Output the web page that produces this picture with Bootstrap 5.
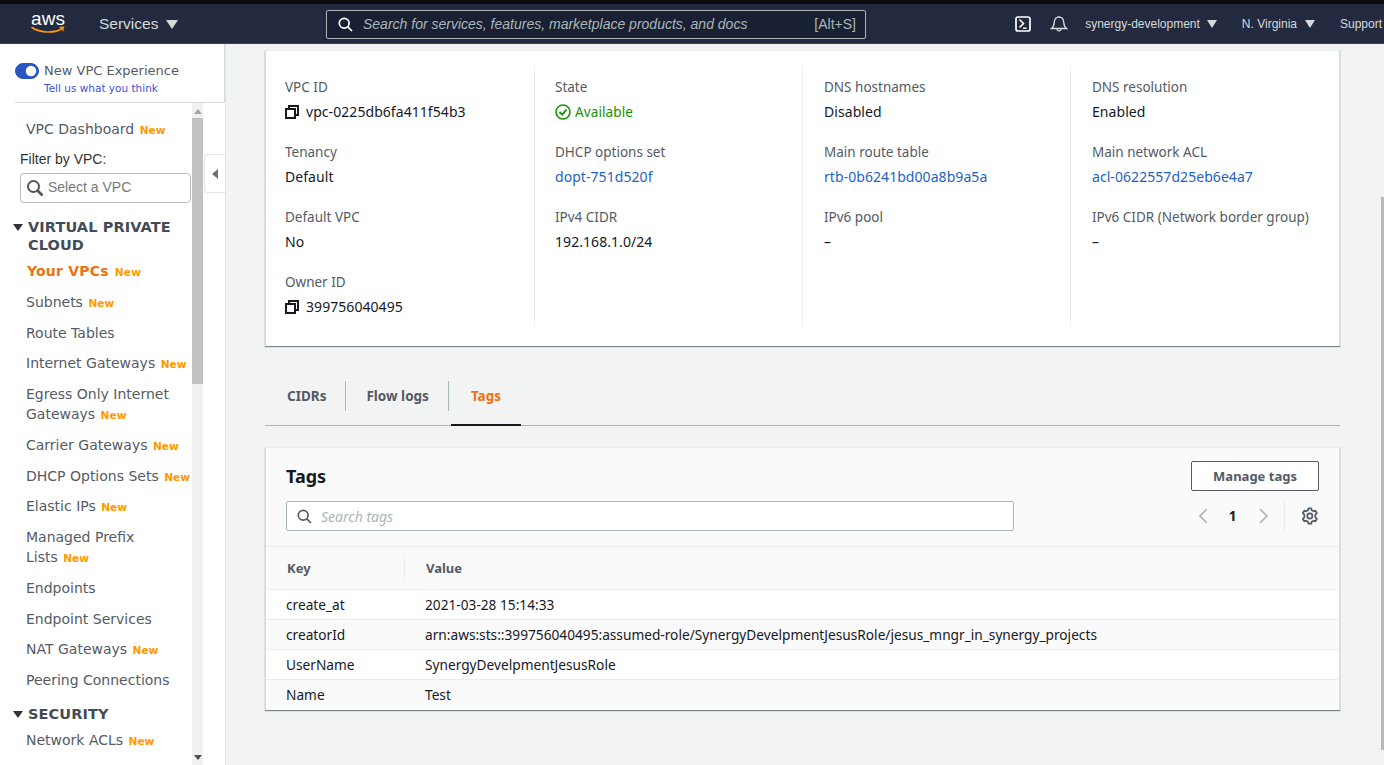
<!DOCTYPE html>
<html lang="en">
<head>
<meta charset="utf-8">
<title>VPC</title>
<link href="https://cdn.jsdelivr.net/npm/bootstrap@5.3.0/dist/css/bootstrap.min.css" rel="stylesheet">
<style>
html,body{height:100%;}
body{font-family:"Noto Sans","Open Sans",sans-serif;font-size:14px;color:#16191f;background:#f2f3f3;overflow:hidden;border-top:4px solid #0c0c0c;}
.shell{height:761px;}
.topbar{height:40px;padding-top:1px;background:#232a3f;color:#d5dbdb;font-family:"Liberation Sans",sans-serif;border-bottom:1px solid #3a4255;flex:none;}
.logo-box{width:36px;margin-left:30px;line-height:1;color:#fff;}
.logo-word{font-size:19px;line-height:16px;display:block;text-align:center;margin-top:-4px;}
.logo-box svg{display:block;margin-top:-1px;}
.svc{font-size:15.5px;margin-left:33px;width:227px;}
.tri{display:inline-block;width:0;height:0;border-left:6px solid transparent;border-right:6px solid transparent;border-top:9px solid #d5dbdb;}
.tri-sm{border-left-width:5.5px;border-right-width:5.5px;border-top-width:8px;}
.topsearch{width:540px;height:29px;border:1px solid #aab7b8;border-radius:2px;background:#1a2033;padding:0 9px 0 11px;font-size:14px;}
.topsearch em{color:#aab7b8;flex:1;margin-left:10px;}
.topsearch span{color:#aab7b8;font-size:14px;}
.topright{font-size:12px;margin-left:auto;}
.side{width:225px;flex:none;background:#fff;color:#545b64;font-family:"DejaVu Sans",sans-serif;}
.side-top{margin-left:15px;height:59px;padding-top:19px;border-bottom:1px solid #d5dbdb;border-right:1px solid #d5dbdb;flex:none;}
.form-switch.toggle-row{padding:0;min-height:0;margin:0;}
.toggle-row .form-check-input{float:none;margin:0;width:24px;height:16px;background-color:#2a55c4;border-color:#2a55c4;flex:none;}
.exp{font-size:13px;line-height:16px;color:#545b64;margin-left:1px;}
.tell{font-size:10.5px;color:#3d4fd6;line-height:14px;margin:2px 0 0 29px;display:block;text-decoration:none;}
.side-main{flex:1;min-height:0;}
.side-list{width:192px;flex:none;overflow:hidden;padding-top:16px;}
.track{width:11px;background:#f1f1f1;flex:none;}
.arrow-up{width:0;height:0;border-left:4px solid transparent;border-right:4px solid transparent;border-bottom:5px solid #a3a3a3;margin:6px auto 4px;}
.arrow-down{width:0;height:0;border-left:4px solid transparent;border-right:4px solid transparent;border-top:5px solid #505050;margin:auto auto 5px;}
.thumb{height:266px;background:#c1c1c1;}
.navi{display:block;margin:0 0 10.75px 26px;line-height:20px;color:#545b64;text-decoration:none;font-size:14px;}
.navi b{color:#f90;font-size:10.6px;font-weight:700;line-height:1;margin-left:1px;}
.navi.on{color:#ec7211;font-weight:700;margin:0 0 11px 27px;letter-spacing:.2px;}
.filter-lb{font-family:"Liberation Sans",sans-serif;margin:0 0 5px 20px;line-height:18px;font-size:14px;color:#333;}
.filter-in{margin:0 1px 15px 20px;height:30px;border:1px solid #bbb;border-radius:4px;padding:0 5px;font-family:"Liberation Sans",sans-serif;color:#777;}
.sect{margin:0 10px 7px 13px;font-weight:700;line-height:18px;color:#444b56;font-size:14.5px;letter-spacing:.1px;}
.sect i{display:block;width:0;height:0;border-left:5px solid transparent;border-right:5px solid transparent;border-top:7px solid #333;margin:6px 5px 0 0;flex:none;}
.sect-gap{margin-top:15px;}
.collapse-tab{position:absolute;left:204px;top:110px;width:21px;height:39px;background:#fff;border:1px solid #e3e5e5;border-right:0;border-radius:4px 0 0 4px;}
.collapse-tab i{width:0;height:0;border-top:5.5px solid transparent;border-bottom:5.5px solid transparent;border-right:6px solid #6b7075;}
.content{flex:1;min-width:0;padding:6px 44px 0 39px;border-left:1px solid #e3e5e5;}
.panel{background:#fff;border-left:1px solid #d5dbdb;border-right:1px solid #d5dbdb;box-shadow:0 1px 1px 0 rgba(0,28,36,.5);border-top:1px solid #eaeded;height:296px;padding:15px 0 0 1px;}
.fieldcol{height:260px;padding:11px 0 0 20px;border-right:1px solid #eaeded;}
.fieldcol:first-child{padding-left:18px;}
.fieldcol:nth-child(3){padding-left:21px;}
.fieldcol:last-child{border-right:0;padding-left:21px;}
.cell{height:65px;line-height:20px;}
.lab{color:#545b64;margin-bottom:5px;font-size:13.5px;}
.val{color:#16191f;font-size:14px;letter-spacing:.06px;}
.val a{color:#1d63c4;text-decoration:none;}
.val.okay{color:#169300;font-size:13.6px;}
.copyline{gap:7px;}
.tabsrow{margin-top:35px;height:45px;border-bottom:1px solid #aab7b8;padding-left:2px;}
.tabby{height:44px;padding:0 20px;font-weight:700;font-size:13.5px;color:#545b64;line-height:30px;position:relative;}
.tabby span{display:block;}
.tabby.sep::after{content:"";position:absolute;right:0;top:0;height:30px;width:1px;background:#aab7b8;}
.tabby.act{color:#ec7211;border-bottom:2px solid #16191f;height:45px;margin-left:2px;}
.tagbox{margin-top:21px;width:1075px;height:263px;background:#fafafa;border-left:1px solid #d5dbdb;border-right:1px solid #d5dbdb;border-top:1px solid #eaeded;box-shadow:0 1px 1px 0 rgba(0,28,36,.5);}
.tagbox-head{height:99px;padding:13px 20px 0 20px;border-bottom:1px solid #eaeded;}
.tagtitle{font-size:18px;font-weight:700;line-height:30px;color:#16191f;margin:0;}
.managebtn{width:128px;height:30px;padding:0;border:1px solid #545b64;border-radius:2px;background:#fff;color:#545b64;font-weight:700;font-size:13px;line-height:27px;}
.tagsearch{width:728px;height:30px;border:1px solid #aab7b8;border-radius:2px;background:#fff;padding:0 10px;}
.tagsearch input{border:0;padding:0 0 0 9px;font-size:14px;font-style:italic;background:transparent;box-shadow:none;}
.tagsearch input::placeholder{color:#aab7b8;}
.pager{width:128px;height:30px;}
.pageno{font-weight:700;font-size:13.5px;}
.pagediv{width:1px;height:30px;background:#eaeded;}
.tagtable{margin:0;color:#16191f;font-size:13.7px;--bs-table-bg:transparent;}
.tagtable th{height:42px;font-weight:700;color:#545b64;font-size:13px;padding:2px 0 0 21px;vertical-align:middle;border-bottom:1px solid #eaeded;position:relative;}
.tagtable td{height:30px;padding:1px 0 0 20px;vertical-align:middle;line-height:20px;border-bottom:1px solid #eaeded;}
.tagtable tr:last-child td{border-bottom:0;}
.tagtable tbody tr:nth-child(odd){background:#fff;}
.keycol{width:139px;}
.tagtable th.keycol::after{content:"";position:absolute;right:0;top:11px;height:20px;width:1px;background:#eaeded;}
.pagebar{position:absolute;right:0;top:193px;width:3px;height:553px;background:#b9b9b9;}
</style>
</head>
<body>
<div class="shell d-flex flex-column position-relative">
  <header class="topbar d-flex align-items-center">
    <div class="logo-box">
      <span class="logo-word">aws</span>
      <svg width="36" height="8" viewBox="0 0 36 8"><path d="M2 1.5C10 7 25 7.5 32 2.5" fill="none" stroke="#f90" stroke-width="1.6" stroke-linecap="round"/><path d="M29.5 1.5L33.6 1.2L32.6 5" fill="none" stroke="#f90" stroke-width="1.3"/></svg>
    </div>
    <div class="svc d-flex align-items-center gap-2"><span>Services</span><i class="tri"></i></div>
    <div class="topsearch d-flex align-items-center">
      <svg width="15" height="15" viewBox="0 0 15 15" fill="none" stroke="#fff" stroke-width="1.7"><circle cx="6.2" cy="6.2" r="4.9"/><path d="M9.8 9.8L14 14"/></svg>
      <em>Search for services, features, marketplace products, and docs</em><span>[Alt+S]</span>
    </div>
    <div class="topright d-flex align-items-center">
      <svg width="16" height="16" viewBox="0 0 16 16" fill="none" stroke="#fff" stroke-width="1.7"><rect x="1" y="1" width="14" height="14" rx="2"/><path d="M4.5 3.5L8.5 7.5L4.5 11.5M8 12.2H11.5" stroke-width="1.6"/></svg>
      <svg style="margin-left:19px" width="18" height="18" viewBox="0 0 18 18" fill="none" stroke="#d5dbdb" stroke-width="1.3"><path d="M1.5 13.5C4 12 4 10 4.3 7C4.6 4 6.5 2.2 9 2.2S13.4 4 13.7 7C14 10 14 12 16.5 13.5Z"/><path d="M6.8 14.2a2.3 2.3 0 0 0 4.4 0"/><path d="M9 1V2"/></svg>
      <span style="margin-left:17px">synergy-development</span><i class="tri tri-sm" style="margin-left:7px"></i>
      <span style="margin-left:25px">N. Virginia</span><i class="tri tri-sm" style="margin-left:8px"></i>
      <span style="margin-left:25px;width:44px;white-space:nowrap;overflow:hidden">Support</span>
    </div>
  </header>
  <div class="d-flex flex-grow-1 position-relative" style="min-height:0">
    <aside class="side d-flex flex-column">
      <div class="side-top">
        <div class="form-check form-switch toggle-row d-flex align-items-center gap-1">
          <input class="form-check-input" type="checkbox" checked aria-label="New VPC Experience">
          <span class="exp">New VPC Experience</span>
        </div>
        <a class="tell" href="#">Tell us what you think</a>
      </div>
      <div class="side-main d-flex">
        <nav class="side-list">
          <a class="navi" href="#">VPC Dashboard <b>New</b></a>
          <div class="filter-lb">Filter by VPC:</div>
          <div class="filter-in d-flex align-items-center gap-1">
            <svg width="18" height="18" viewBox="0 0 18 18" fill="none" stroke="#555" stroke-width="2"><circle cx="7.5" cy="7.5" r="5.5"/><path d="M11.5 11.5L16.5 16.5" stroke-width="2.6"/></svg>
            <span>Select a VPC</span>
          </div>
          <div class="sect d-flex"><i></i><span>VIRTUAL PRIVATE CLOUD</span></div>
          <a class="navi on" href="#">Your VPCs <b>New</b></a>
          <a class="navi" href="#">Subnets <b>New</b></a>
          <a class="navi" href="#">Route Tables</a>
          <a class="navi" href="#">Internet Gateways <b>New</b></a>
          <a class="navi" href="#">Egress Only Internet<br>Gateways <b>New</b></a>
          <a class="navi" href="#">Carrier Gateways <b>New</b></a>
          <a class="navi" href="#">DHCP Options Sets <b>New</b></a>
          <a class="navi" href="#">Elastic IPs <b>New</b></a>
          <a class="navi" href="#">Managed Prefix<br>Lists <b>New</b></a>
          <a class="navi" href="#">Endpoints</a>
          <a class="navi" href="#">Endpoint Services</a>
          <a class="navi" href="#">NAT Gateways <b>New</b></a>
          <a class="navi" href="#">Peering Connections</a>
          <div class="sect sect-gap d-flex"><i></i><span>SECURITY</span></div>
          <a class="navi" href="#">Network ACLs <b>New</b></a>
        </nav>
        <div class="track d-flex flex-column">
          <div class="arrow-up"></div>
          <div class="thumb"></div>
          <div class="arrow-down"></div>
        </div>
      </div>
      <div class="collapse-tab d-flex align-items-center justify-content-center"><i></i></div>
    </aside>
    <main class="content">
      <section class="panel">
        <div class="row g-0">
          <div class="col-3 fieldcol">
            <div class="cell"><div class="lab">VPC ID</div><div class="val d-flex align-items-center copyline"><svg width="14" height="14" viewBox="0 0 14 14" fill="none" stroke="#16191f" stroke-width="2"><rect x="1" y="4" width="9" height="9"/><path d="M4 4V1H13V10H10"/></svg><span>vpc-0225db6fa411f54b3</span></div></div>
            <div class="cell"><div class="lab">Tenancy</div><div class="val">Default</div></div>
            <div class="cell"><div class="lab">Default VPC</div><div class="val">No</div></div>
            <div class="cell"><div class="lab">Owner ID</div><div class="val d-flex align-items-center copyline"><svg width="14" height="14" viewBox="0 0 14 14" fill="none" stroke="#16191f" stroke-width="2"><rect x="1" y="4" width="9" height="9"/><path d="M4 4V1H13V10H10"/></svg><span>399756040495</span></div></div>
          </div>
          <div class="col-3 fieldcol">
            <div class="cell"><div class="lab">State</div><div class="val okay d-flex align-items-center gap-1"><svg width="16" height="16" viewBox="0 0 16 16" fill="none" stroke="#169300" stroke-width="1.6"><circle cx="8" cy="8" r="7"/><path d="M4.5 8L7.2 10.7L11.5 5.6" stroke-width="1.8"/></svg><span>Available</span></div></div>
            <div class="cell"><div class="lab">DHCP options set</div><div class="val"><a href="#">dopt-751d520f</a></div></div>
            <div class="cell"><div class="lab">IPv4 CIDR</div><div class="val">192.168.1.0/24</div></div>
          </div>
          <div class="col-3 fieldcol">
            <div class="cell"><div class="lab">DNS hostnames</div><div class="val">Disabled</div></div>
            <div class="cell"><div class="lab">Main route table</div><div class="val"><a href="#">rtb-0b6241bd00a8b9a5a</a></div></div>
            <div class="cell"><div class="lab">IPv6 pool</div><div class="val">–</div></div>
          </div>
          <div class="col-3 fieldcol">
            <div class="cell"><div class="lab">DNS resolution</div><div class="val">Enabled</div></div>
            <div class="cell"><div class="lab">Main network ACL</div><div class="val"><a href="#">acl-0622557d25eb6e4a7</a></div></div>
            <div class="cell"><div class="lab">IPv6 CIDR (Network border group)</div><div class="val">–</div></div>
          </div>
        </div>
      </section>
      <div class="tabsrow d-flex">
        <div class="tabby sep"><span>CIDRs</span></div>
        <div class="tabby sep"><span>Flow logs</span></div>
        <div class="tabby act"><span>Tags</span></div>
      </div>
      <section class="tagbox">
        <div class="tagbox-head">
          <div class="d-flex justify-content-between align-items-center">
            <h2 class="tagtitle">Tags</h2>
            <button class="managebtn" type="button">Manage tags</button>
          </div>
          <div class="d-flex justify-content-between align-items-center" style="margin-top:10px">
            <div class="tagsearch d-flex align-items-center">
              <svg width="15" height="15" viewBox="0 0 15 15" fill="none" stroke="#545b64" stroke-width="1.7" class="flex-shrink-0"><circle cx="6.2" cy="6.2" r="4.9"/><path d="M9.8 9.8L14 14"/></svg>
              <input class="form-control" type="text" placeholder="Search tags" aria-label="Search tags">
            </div>
            <div class="pager d-flex align-items-center">
              <svg width="12" height="16" viewBox="0 0 12 16" fill="none" stroke="#aab7b8" stroke-width="1.7" style="margin-left:6px"><path d="M10 1L3 8L10 15"/></svg>
              <span class="pageno" style="margin-left:20px">1</span>
              <svg width="12" height="16" viewBox="0 0 12 16" fill="none" stroke="#aab7b8" stroke-width="1.7" style="margin-left:21px"><path d="M2 1L9 8L2 15"/></svg>
              <span class="pagediv" style="margin-left:15px"></span>
              <svg width="18" height="18" viewBox="0 0 18 18" fill="none" stroke="#545b64" style="margin-left:16px"><circle cx="9" cy="9" r="2.6" stroke-width="1.8"/><path d="M7.6 1.2H10.4L10.9 3.2L12.7 4.2L14.7 3.6L16.1 6L14.6 7.5V10.5L16.1 12L14.7 14.4L12.7 13.8L10.9 14.8L10.4 16.8H7.6L7.1 14.8L5.3 13.8L3.3 14.4L1.9 12L3.4 10.5V7.5L1.9 6L3.3 3.6L5.3 4.2L7.1 3.2Z" stroke-width="1.8" stroke-linejoin="round"/></svg>
            </div>
          </div>
        </div>
        <table class="table tagtable">
          <thead><tr><th class="keycol">Key</th><th>Value</th></tr></thead>
          <tbody>
            <tr><td>create_at</td><td>2021-03-28 15:14:33</td></tr>
            <tr><td>creatorId</td><td>arn:aws:sts::399756040495:assumed-role/SynergyDevelpmentJesusRole/jesus_mngr_in_synergy_projects</td></tr>
            <tr><td>UserName</td><td>SynergyDevelpmentJesusRole</td></tr>
            <tr><td>Name</td><td>Test</td></tr>
          </tbody>
        </table>
      </section>
    </main>
  </div>
  <div class="pagebar"></div>
</div>
<script src="https://cdn.jsdelivr.net/npm/bootstrap@5.3.0/dist/js/bootstrap.bundle.min.js"></script>
</body>
</html>
